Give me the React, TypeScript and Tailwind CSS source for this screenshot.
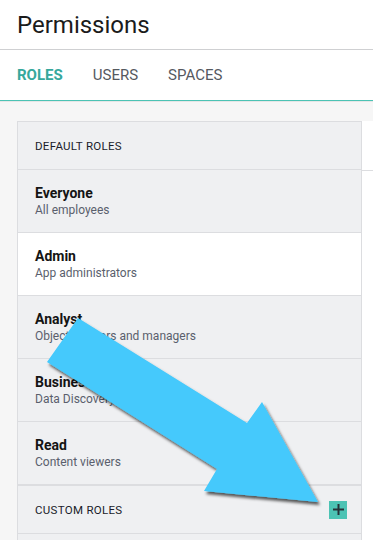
import React from "react";

type Role = { name: string; desc: string; active?: boolean; thick?: boolean };

const roles: Role[] = [
  { name: "Everyone", desc: "All employees" },
  { name: "Admin", desc: "App administrators", active: true },
  { name: "Analyst", desc: "Object creators and managers" },
  { name: "Business Analyst", desc: "Data Discovery users" },
  { name: "Read", desc: "Content viewers", thick: true },
];

export default function App() {
  return (
    <div className="relative h-[540px] w-full overflow-hidden bg-[#f6f6f6] font-['Roboto',sans-serif]">
      <header className="flex h-[50px] items-center border-b border-[#cfd0d2] bg-white pl-[17px]">
        <h1 className="text-[24px] leading-none text-[#1b1b1b]">Permissions</h1>
      </header>
      <nav className="flex h-[51px] items-center gap-[30px] border-b border-[#4cc3b4] bg-white pl-[17px] text-[15px] shadow-[0_1px_0_#e6e6e6]">
        <span className="font-bold text-[#36a89c]">ROLES</span>
        <span className="text-[#55595f]">USERS</span>
        <span className="text-[#55595f]">SPACES</span>
      </nav>
      <main className="flex pl-[17px] pt-[20px]">
        <section className="w-[345px] shrink-0 border border-[#dcdde0] bg-[#eff0f2]">
          <div className="flex h-[48px] items-center border-b border-[#dcdde0] pl-[17px] pt-[3px] text-[11.5px] tracking-[0.3px] text-[#1a1c2a]">
            DEFAULT ROLES
          </div>
          {roles.map((r) => (
            <div
              key={r.name}
              className={
                "flex flex-col justify-center pl-[17px] " +
                (r.thick ? "h-[64px] border-b-2 " : "h-[63px] border-b ") +
                "border-[#dcdde0] " +
                (r.active ? "bg-white" : "bg-[#eff0f2]")
              }
            >
              <div className="text-[14px] font-bold leading-[18px] text-[#141414]">{r.name}</div>
              <div className="text-[12px] leading-[16px] text-[#5a5f6d]">{r.desc}</div>
            </div>
          ))}
          <div className="flex h-[48px] items-center justify-between border-b border-[#dcdde0] pl-[17px] pr-[14px] text-[11.5px] tracking-[0.3px] text-[#1a1c2a]">
            <span className="pt-[3px]">CUSTOM ROLES</span>
            <button className="flex h-[18px] w-[18px] items-center justify-center bg-[#4cc3b4]">
              <svg width="13" height="13" viewBox="0 0 13 13">
                <path d="M6.5 1v11M1 6.5h11" stroke="#263238" strokeWidth="2" />
              </svg>
            </button>
          </div>
          <div className="h-[40px]" />
        </section>
        <section className="flex-1 bg-white">
          <div className="h-[50px] border-b border-[#dcdde0]" />
        </section>
      </main>
      <svg
        className="pointer-events-none absolute left-0 top-0"
        width="373"
        height="540"
        viewBox="0 0 373 540"
      >
        <defs>
          <filter id="sh" x="-10%" y="-10%" width="130%" height="130%">
            <feDropShadow dx="2" dy="3" stdDeviation="1.6" floodColor="#000" floodOpacity="0.65" />
          </filter>
        </defs>
        <polygon
          points="78,318 247,423 262,402 318,502 204,491 217,469 47,362"
          fill="#44c9fc"
          filter="url(#sh)"
        />
      </svg>
    </div>
  );
}
